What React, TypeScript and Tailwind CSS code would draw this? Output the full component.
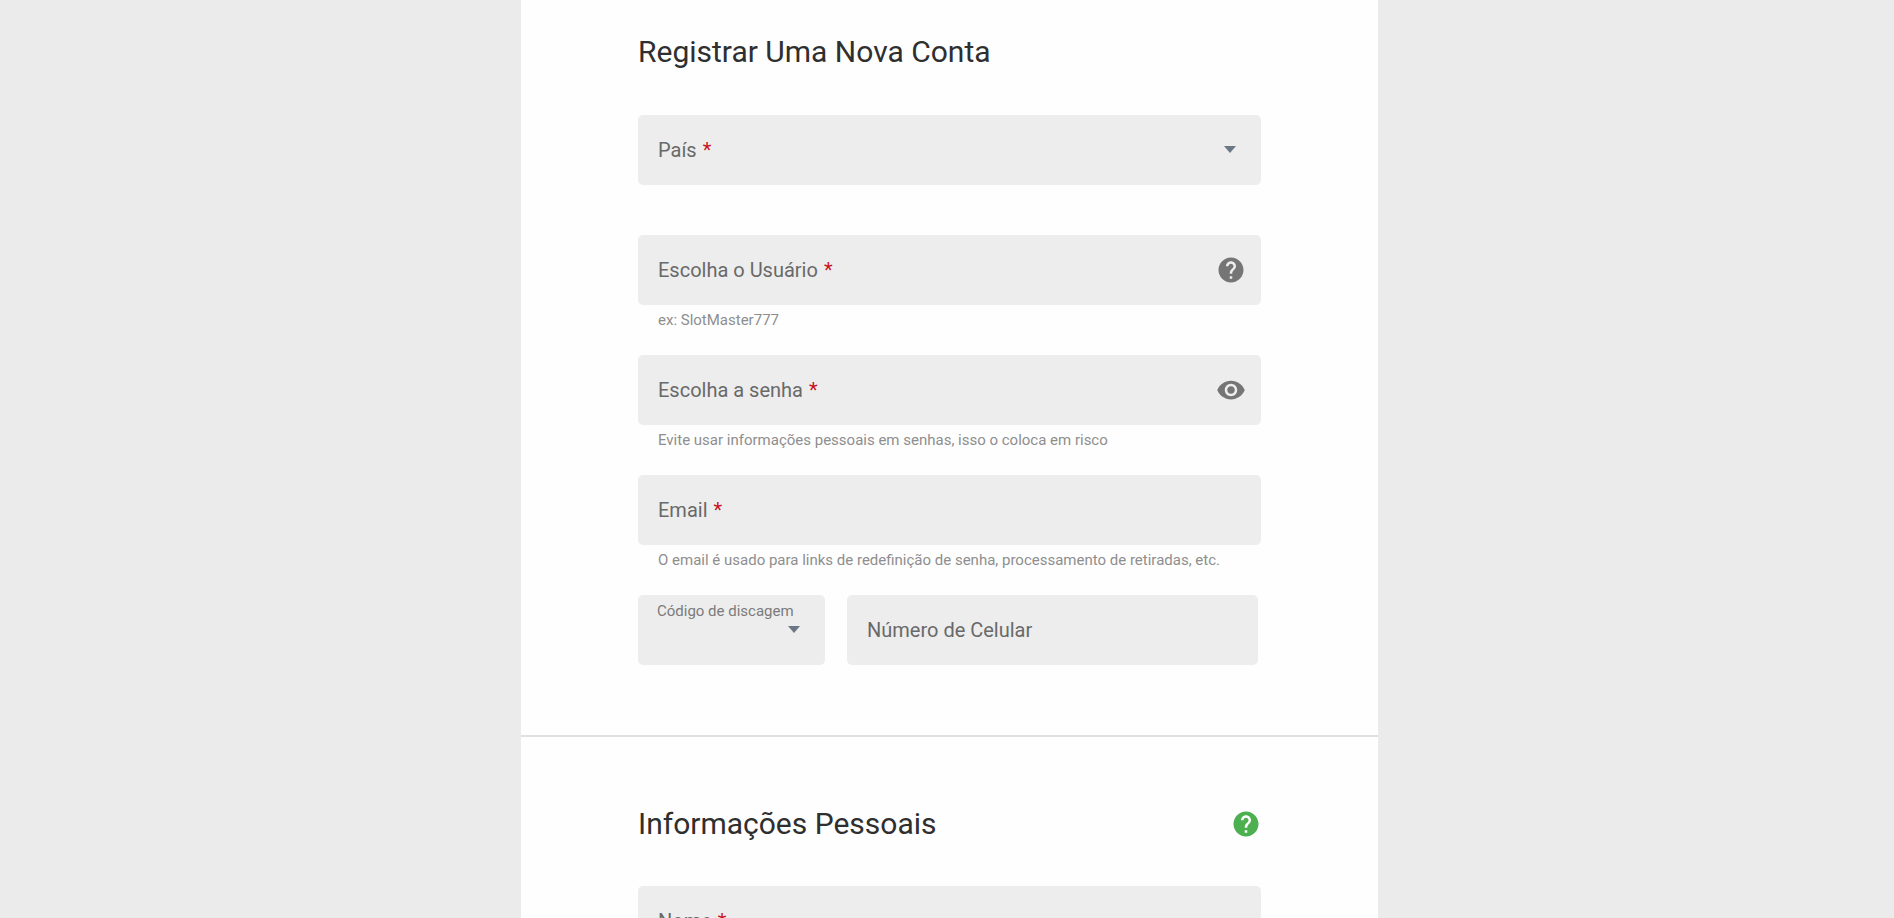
import React, { useState } from 'react';
import { MdHelp, MdVisibility, MdVisibilityOff } from 'react-icons/md';

interface FieldProps {
  id: string;
  label: string;
  required?: boolean;
  hint?: string;
  type?: string;
  icon?: React.ReactNode;
}

const Caret = ({ className }: { className: string }) => (
  <svg
    className={`pointer-events-none absolute h-[7px] w-3 text-[#6b7785] ${className}`}
    viewBox="0 0 12 7"
    fill="currentColor"
    aria-hidden="true"
  >
    <path d="M0 0h12L6 7z" />
  </svg>
);

const RequiredMark = () => <span className="text-[#c8141e]">*</span>;

const TextField: React.FC<FieldProps> = ({ id, label, required, hint, type = 'text', icon }) => {
  const [value, setValue] = useState('');

  return (
    <div>
      <div className="relative">
        <input
          id={id}
          type={type}
          value={value}
          onChange={(e) => setValue(e.target.value)}
          required={required}
          className="block h-[70px] w-full rounded-[5px] bg-[#ededed] pl-5 pr-14 pt-4 text-xl text-[#333] outline-none"
        />
        <label
          htmlFor={id}
          className={`pointer-events-none absolute left-5 ${
            value ? 'top-1.5 text-[15px] leading-5' : 'inset-y-0 flex items-center gap-1.5 text-xl'
          } text-[#696969]`}
        >
          {label} {required && <RequiredMark />}
        </label>
        {icon && <div className="absolute inset-y-0 right-[15px] flex items-center">{icon}</div>}
      </div>
      <p className="h-[50px] pl-5 pt-[5px] text-[15px] leading-5 text-[#8e8e8e]">{hint}</p>
    </div>
  );
};

const SectionTitle = ({ children }: { children: React.ReactNode }) => (
  <h2 className="text-3xl leading-9 text-[#2f2f2f]">{children}</h2>
);

const App: React.FC = () => {
  const [showPassword, setShowPassword] = useState(false);
  const [country, setCountry] = useState('');

  return (
    <div className="grid h-screen grid-cols-[521fr_857fr_516fr] overflow-hidden bg-[#ebebeb] font-['Roboto',sans-serif]">
      <form className="col-start-2 bg-[#fefefe]">
        <section className="border-b-2 border-[#e0e0e0] px-[117px] pb-5 pt-[34px]">
          <SectionTitle>Registrar Uma Nova Conta</SectionTitle>

          <div className="relative mb-[50px] mt-[45px]">
            <select
              id="country"
              value={country}
              onChange={(e) => setCountry(e.target.value)}
              className="block h-[70px] w-full appearance-none rounded-[5px] bg-[#ededed] px-5 pt-4 text-xl text-[#333] outline-none"
            >
              <option value=""></option>
              <option value="BR">Brasil</option>
              <option value="PT">Portugal</option>
            </select>
            <label
              htmlFor="country"
              className={`pointer-events-none absolute left-5 ${
                country ? 'top-1.5 text-[15px] leading-5' : 'inset-y-0 flex items-center gap-1.5 text-xl'
              } text-[#696969]`}
            >
              País <RequiredMark />
            </label>
            <Caret className="right-[25px] top-[31px]" />
          </div>

          <TextField
            id="username"
            label="Escolha o Usuário"
            required
            hint="ex: SlotMaster777"
            icon={
              <button type="button" aria-label="Ajuda" className="text-[#757575]">
                <MdHelp size={30} />
              </button>
            }
          />
          <TextField
            id="password"
            label="Escolha a senha"
            required
            type={showPassword ? 'text' : 'password'}
            hint="Evite usar informações pessoais em senhas, isso o coloca em risco"
            icon={
              <button
                type="button"
                aria-label="Mostrar senha"
                onClick={() => setShowPassword(!showPassword)}
                className="text-[#757575]"
              >
                {showPassword ? <MdVisibilityOff size={30} /> : <MdVisibility size={30} />}
              </button>
            }
          />
          <TextField
            id="email"
            label="Email"
            required
            type="email"
            hint="O email é usado para links de redefinição de senha, processamento de retiradas, etc."
          />

          <div className="mr-[3px] grid grid-cols-[187fr_411fr] gap-[22px]">
            <div className="relative">
              <select
                id="dial-code"
                className="block h-[70px] w-full appearance-none rounded-[5px] bg-[#ededed] px-5 pt-4 text-xl text-[#333] outline-none"
              >
                <option value=""></option>
                <option value="55">+55</option>
                <option value="351">+351</option>
              </select>
              <label
                htmlFor="dial-code"
                className="pointer-events-none absolute left-[19px] top-1.5 whitespace-nowrap text-[15px] leading-5 text-[#7b7b7b]"
              >
                Código de discagem
              </label>
              <Caret className="right-[25px] top-[31px]" />
            </div>
            <TextField id="phone" label="Número de Celular" type="tel" />
          </div>
        </section>

        <section className="px-[117px] pt-[69px]">
          <div className="mb-11 flex items-center justify-between">
            <SectionTitle>Informações Pessoais</SectionTitle>
            <button type="button" aria-label="Ajuda" className="text-[#4caf50]">
              <MdHelp size={30} />
            </button>
          </div>
          <TextField id="name" label="Nome" required />
        </section>
      </form>
    </div>
  );
};

export default App;
